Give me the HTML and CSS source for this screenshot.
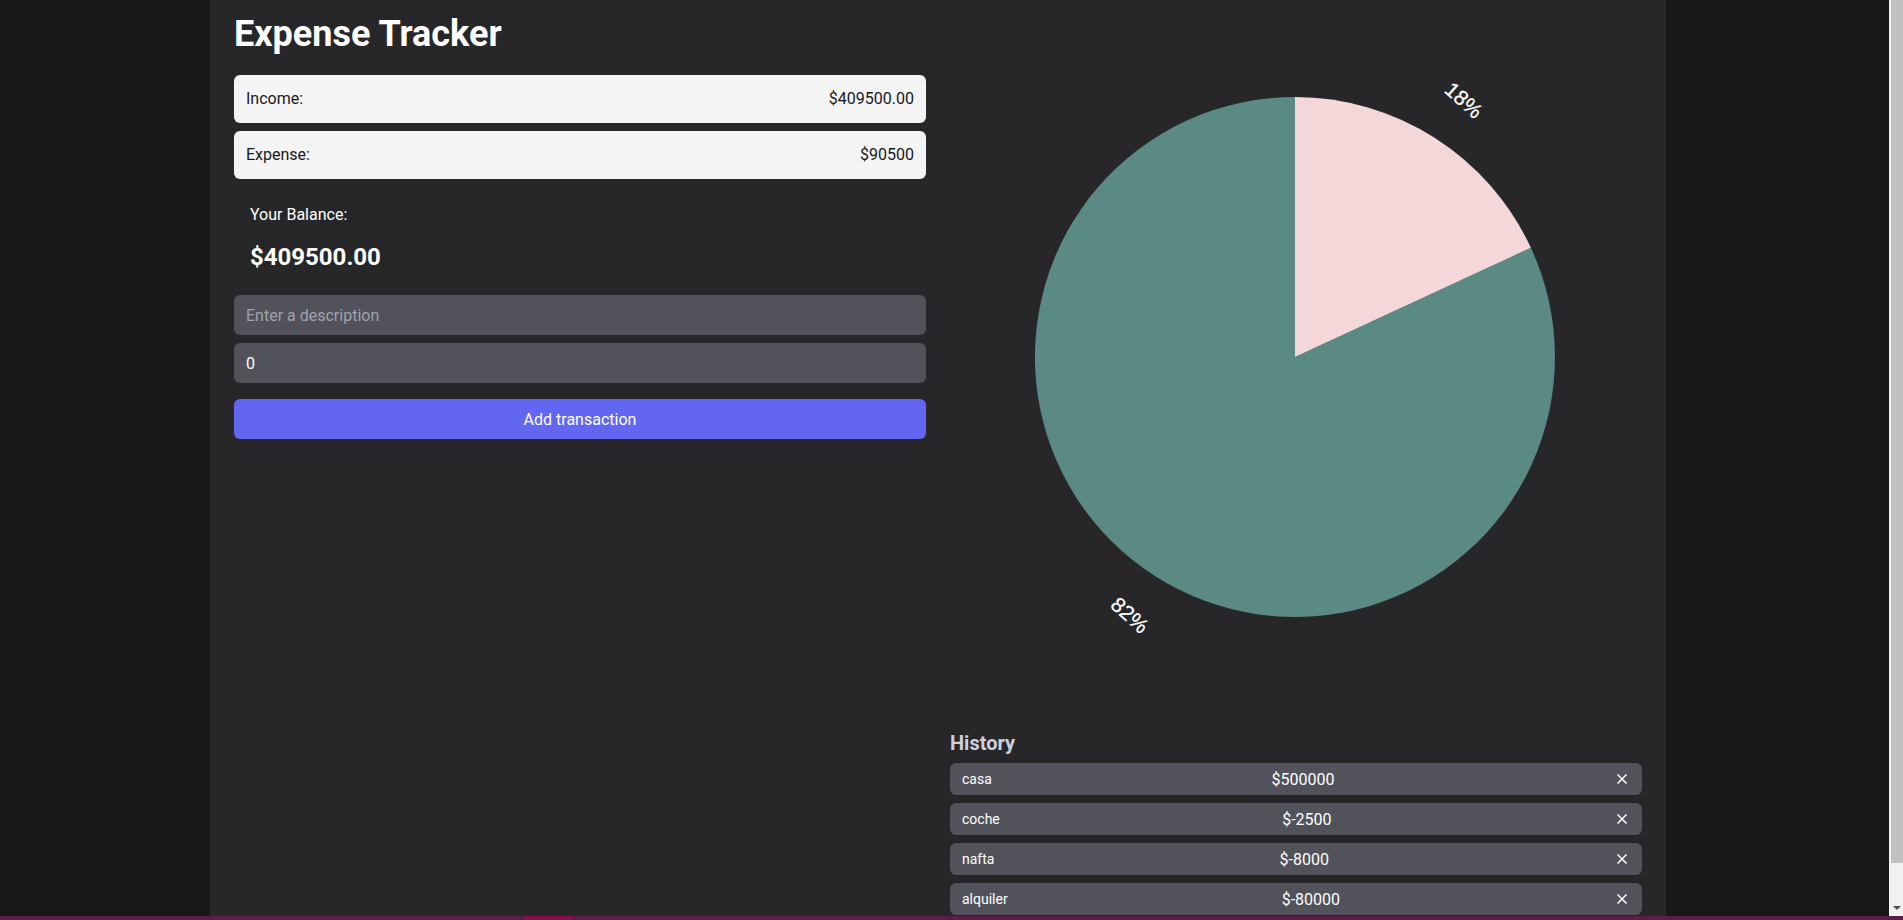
FILE: index.html
```html
<!DOCTYPE html>
<html lang="en">
<head>
<meta charset="utf-8">
<title>Expense Tracker</title>
<link rel="stylesheet" href="styles.css">
</head>
<body>
<div class="page">
  <div class="layout">
    <section class="left">
      <h1 class="title">Expense Tracker</h1>
      <div class="summary-row"><span>Income:</span><span>$409500.00</span></div>
      <div class="summary-row"><span>Expense:</span><span>$90500</span></div>
      <div class="balance">
        <p class="balance-label">Your Balance:</p>
        <p class="balance-value">$409500.00</p>
      </div>
      <form class="form">
        <input class="input" type="text" placeholder="Enter a description">
        <input class="input" type="number" value="0">
        <button class="button" type="button">Add transaction</button>
      </form>
    </section>
    <section class="right">
      <svg class="chart" viewBox="0 0 692 729" width="692" height="729">
        <path d="M345 357 L580.9 247.8 A260 260 0 1 1 345 97 Z" fill="#5b8984"/>
        <path d="M345 357 L345 97 A260 260 0 0 1 580.9 247.8 Z" fill="#f3d7d9"/>
        <text class="pie-label" x="0" y="0" transform="translate(514 100) rotate(42)">18%</text>
        <text class="pie-label" x="0" y="0" transform="translate(180 615) rotate(42)">82%</text>
      </svg>
      <h2 class="history-title">History</h2>
      <ul class="history">
        <li class="history-item"><span class="desc">casa</span><span class="amount">$500000</span><button class="remove" type="button" aria-label="Remove"><svg viewBox="0 0 10 10" width="10" height="10"><path d="M1 1 L9 9 M9 1 L1 9" stroke="#fff" stroke-width="1.5" stroke-linecap="square"/></svg></button></li>
        <li class="history-item"><span class="desc">coche</span><span class="amount">$-2500</span><button class="remove" type="button" aria-label="Remove"><svg viewBox="0 0 10 10" width="10" height="10"><path d="M1 1 L9 9 M9 1 L1 9" stroke="#fff" stroke-width="1.5" stroke-linecap="square"/></svg></button></li>
        <li class="history-item"><span class="desc">nafta</span><span class="amount">$-8000</span><button class="remove" type="button" aria-label="Remove"><svg viewBox="0 0 10 10" width="10" height="10"><path d="M1 1 L9 9 M9 1 L1 9" stroke="#fff" stroke-width="1.5" stroke-linecap="square"/></svg></button></li>
        <li class="history-item"><span class="desc">alquiler</span><span class="amount">$-80000</span><button class="remove" type="button" aria-label="Remove"><svg viewBox="0 0 10 10" width="10" height="10"><path d="M1 1 L9 9 M9 1 L1 9" stroke="#fff" stroke-width="1.5" stroke-linecap="square"/></svg></button></li>
      </ul>
    </section>
  </div>
</div>
<div class="scrollbar" aria-hidden="true">
  <div class="scrollbar-thumb"></div>
  <div class="scrollbar-arrow"></div>
</div>
<div class="taskbar"><span class="taskbar-active"></span></div>
</body>
</html>
```

FILE: styles.css
```css
html, body {
  margin: 0;
  background: #18181b;
  font-family: Roboto, "Segoe UI", "Liberation Sans", sans-serif;
}

.page {
  box-sizing: border-box;
  width: 1456px;
  margin-left: calc(50% - 741.5px);
  min-height: 960px;
  padding: 0 24px;
  background: #27272a;
}

.layout {
  display: grid;
  grid-template-columns: 692px 692px;
  column-gap: 24px;
}

.left {
  display: flex;
  flex-direction: column;
}

.title {
  margin: 14px 0 21px;
  font-size: 36px;
  line-height: 40px;
  font-weight: 700;
  color: #ffffff;
}

.summary-row {
  display: flex;
  justify-content: space-between;
  margin-bottom: 8px;
  padding: 12px;
  border-radius: 6px;
  background: #f4f4f5;
  color: #18181b;
  font-size: 16px;
  line-height: 24px;
}

.balance {
  padding: 16px 16px 14px;
  margin-bottom: 8px;
  color: #ffffff;
}

.balance-label {
  margin: 0;
  font-size: 16px;
  line-height: 24px;
}

.balance-value {
  margin: 14px 0 0;
  font-size: 24px;
  line-height: 32px;
  font-weight: 700;
}

.form {
  display: flex;
  flex-direction: column;
  gap: 8px;
  margin: 0;
}

.input {
  box-sizing: border-box;
  height: 40px;
  padding: 0 12px;
  border: 0;
  border-radius: 6px;
  background: #52525b;
  color: #ffffff;
  font-family: inherit;
  font-size: 16px;
  outline: none;
}

.input::placeholder {
  color: #a1a1aa;
}

.input::-webkit-outer-spin-button,
.input::-webkit-inner-spin-button {
  -webkit-appearance: none;
  margin: 0;
}

.button {
  height: 40px;
  margin-top: 8px;
  border: 0;
  border-radius: 6px;
  background: #6366f1;
  color: #ffffff;
  font-family: inherit;
  font-size: 16px;
  cursor: pointer;
}

.right {
  display: flex;
  flex-direction: column;
}

.chart {
  display: block;
}

.pie-label {
  fill: #ffffff;
  font-family: "Liberation Sans", Arial, sans-serif;
  font-size: 21px;
  text-anchor: middle;
  dominant-baseline: central;
  stroke: #ffffff;
  stroke-width: 0.3px;
}

.history-title {
  margin: 0 0 6px;
  font-size: 20px;
  line-height: 28px;
  font-weight: 700;
  color: #cdd0dc;
}

.history {
  display: flex;
  flex-direction: column;
  gap: 8px;
  margin: 0;
  padding: 0;
  list-style: none;
}

.history-item {
  display: flex;
  justify-content: space-between;
  align-items: center;
  height: 32px;
  padding: 0 12px;
  border-radius: 6px;
  background: #52525b;
  color: #ffffff;
}

.desc {
  font-size: 14px;
}

.amount {
  font-size: 16px;
}

.remove {
  display: flex;
  align-items: center;
  justify-content: center;
  width: 16px;
  height: 16px;
  padding: 0;
  border: 0;
  background: transparent;
  cursor: pointer;
}

.scrollbar {
  position: fixed;
  top: 0;
  right: 0;
  bottom: 4px;
  width: 14px;
  background: #f1f1f1;
}

.scrollbar-thumb {
  position: absolute;
  top: 0;
  left: 2px;
  right: 0;
  height: 863px;
  background: #c1c1c1;
}

.scrollbar-arrow {
  position: absolute;
  left: 4px;
  bottom: 6px;
  width: 0;
  height: 0;
  border-left: 4px solid transparent;
  border-right: 4px solid transparent;
  border-top: 4px solid #505050;
}

.taskbar {
  position: fixed;
  left: 0;
  right: 0;
  bottom: 0;
  height: 4px;
  background: #5a1d47;
}

.taskbar-active {
  position: absolute;
  left: 524px;
  top: 0;
  width: 49px;
  height: 4px;
  background: #850f4f;
}
```
